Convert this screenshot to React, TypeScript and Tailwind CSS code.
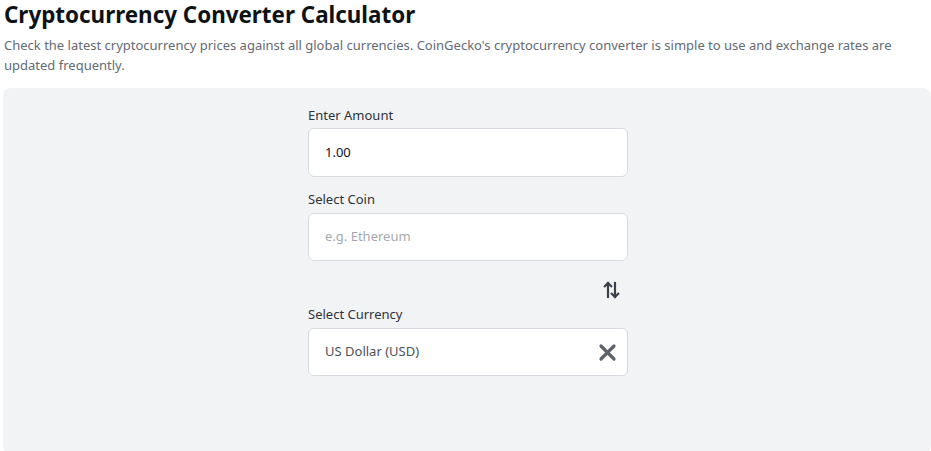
export default function App() {
  return (
    <div className="w-[931px] h-[451px] bg-white overflow-hidden font-['Noto_Sans',sans-serif]">
      {/* Header */}
      <div className="pl-[4px] pr-4">
        <h1 className="text-[22.4px] leading-[28px] font-bold text-[#0d1217] pt-[1px]">
          Cryptocurrency Converter Calculator
        </h1>
        <p className="mt-[6px] text-[13px] leading-[20px] text-[#646b73]">
          Check the latest cryptocurrency prices against all global currencies. CoinGecko's cryptocurrency converter is simple to use and exchange rates are updated frequently.
        </p>
      </div>

      {/* Converter panel */}
      <div className="ml-[3px] mt-[13px] h-[366px] rounded-[8px] bg-[#f2f3f5] pt-[19px] pl-[2px]">
        <div className="mx-auto w-[320px] flex flex-col">
          <label className="text-[13px] leading-[16px] text-[#2d333a] mb-[5px]">Enter Amount</label>
          <div className="h-[49px] rounded-[6px] border border-[#d8dbe0] bg-white px-4 flex items-center text-[13px] text-[#0d1217]">
            1.00
          </div>

          <label className="mt-[14px] text-[13px] leading-[16px] text-[#2d333a] mb-[6px]">Select Coin</label>
          <div className="h-[48px] rounded-[6px] border border-[#d8dbe0] bg-white px-4 flex items-center text-[13px] text-[#a5a9ae]">
            e.g. Ethereum
          </div>

          <div className="flex justify-end pr-[8px] mt-[20px] h-[18px]">
            <svg width="17" height="18" viewBox="0 0 17 18" fill="none" stroke="#3a4049" strokeWidth="2.2" strokeLinecap="square">
              <path d="M5 2 V16" />
              <path d="M1.8 5.2 L5 2 L8.2 5.2" strokeLinejoin="miter" />
              <path d="M12 2 V16" />
              <path d="M8.8 12.8 L12 16 L15.2 12.8" strokeLinejoin="miter" />
            </svg>
          </div>

          <label className="mt-[7px] text-[13px] leading-[16px] text-[#2d333a] mb-[6px]">Select Currency</label>
          <div className="h-[48px] rounded-[6px] border border-[#d8dbe0] bg-white pl-4 pr-[10px] flex items-center justify-between text-[13px] text-[#4b5158]">
            <span>US Dollar (USD)</span>
            <svg width="19" height="19" viewBox="0 0 19 19" fill="none" stroke="#5d636b" strokeWidth="3.2" strokeLinecap="round">
              <path d="M3 3 L16 16" />
              <path d="M16 3 L3 16" />
            </svg>
          </div>
        </div>
      </div>
    </div>
  );
}
